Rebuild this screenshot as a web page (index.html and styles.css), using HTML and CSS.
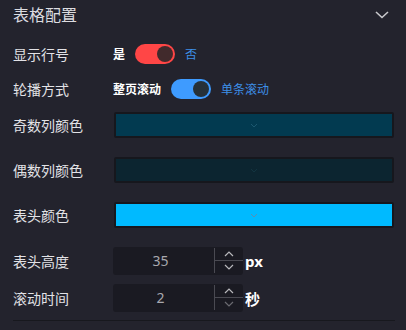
FILE: index.html
```html
<!DOCTYPE html>
<html>
<head>
    <meta charset="utf-8">
    <title>表格配置</title>
    <link rel="stylesheet" href="styles.css">
</head>
<body>
    <div class="panel">
        <div class="panel-header">
            <span class="panel-title">表格配置</span>
            <svg class="chevron" width="14" height="8" viewBox="0 0 14 8">
                <path d="M1 1 L7 6.5 L13 1" fill="none" stroke="#c8c8cc" stroke-width="1.6"/>
            </svg>
        </div>

        <div class="row row-switch first">
            <label class="label">显示行号</label>
            <span class="opt on">是</span>
            <span class="switch red"><span class="knob"></span></span>
            <span class="opt alt">否</span>
        </div>
        <div class="row row-switch">
            <label class="label">轮播方式</label>
            <span class="opt on">整页滚动</span>
            <span class="switch blue"><span class="knob"></span></span>
            <span class="opt alt">单条滚动</span>
        </div>

        <div class="row row-color first">
            <label class="label">奇数列颜色</label>
            <div class="swatch odd">
                <svg width="8" height="5" viewBox="0 0 8 5"><path d="M1 1 L4 4 L7 1" fill="none" stroke="#1c5870" stroke-width="1"/></svg>
            </div>
        </div>
        <div class="row row-color">
            <label class="label">偶数列颜色</label>
            <div class="swatch even">
                <svg width="8" height="5" viewBox="0 0 8 5"><path d="M1 1 L4 4 L7 1" fill="none" stroke="#123440" stroke-width="1"/></svg>
            </div>
        </div>
        <div class="row row-color">
            <label class="label">表头颜色</label>
            <div class="swatch head">
                <svg width="8" height="5" viewBox="0 0 8 5"><path d="M1 1 L4 4 L7 1" fill="none" stroke="#5a8fb0" stroke-width="1"/></svg>
            </div>
        </div>

        <div class="row row-num first">
            <label class="label">表头高度</label>
            <div class="num-input">
                <span class="num-value">35</span>
                <div class="num-ctrl">
                    <span class="step"><svg width="10" height="6" viewBox="0 0 10 6"><path d="M1 5 L5 1 L9 5" fill="none" stroke="#b8b8bc" stroke-width="1.2"/></svg></span>
                    <span class="step down"><svg width="10" height="6" viewBox="0 0 10 6"><path d="M1 1 L5 5 L9 1" fill="none" stroke="#b8b8bc" stroke-width="1.2"/></svg></span>
                </div>
            </div>
            <span class="unit">px</span>
        </div>
        <div class="row row-num">
            <label class="label">滚动时间</label>
            <div class="num-input">
                <span class="num-value">2</span>
                <div class="num-ctrl">
                    <span class="step"><svg width="10" height="6" viewBox="0 0 10 6"><path d="M1 5 L5 1 L9 5" fill="none" stroke="#b8b8bc" stroke-width="1.2"/></svg></span>
                    <span class="step down"><svg width="10" height="6" viewBox="0 0 10 6"><path d="M1 1 L5 5 L9 1" fill="none" stroke="#6a6a70" stroke-width="1.2"/></svg></span>
                </div>
            </div>
            <span class="unit">秒</span>
        </div>

        <div class="divider"></div>
    </div>
</body>
</html>
```

FILE: styles.css
```css
* {
    margin: 0;
    padding: 0;
    box-sizing: border-box;
}
body {
    font-family: "Noto Sans", "Noto Sans CJK SC", sans-serif;
    background: #23232d;
    color: #e2e2e6;
}
.panel {
    padding: 0 11px 0 13px;
}
.panel-header {
    height: 28px;
    display: flex;
    align-items: center;
    justify-content: space-between;
}
.panel-title {
    font-size: 16px;
    color: #dcdce0;
}
.chevron {
    margin-right: 6px;
    margin-top: 2px;
}
.row {
    display: flex;
    align-items: center;
}
.label {
    width: 100px;
    flex-shrink: 0;
    font-size: 14px;
    color: #e2e2e6;
}
.row-switch {
    height: 20px;
    margin-top: 15px;
}
.row-switch.first {
    margin-top: 16px;
}
.opt {
    font-size: 12px;
}
.opt.on {
    color: #ffffff;
    font-weight: bold;
}
.opt.alt {
    color: #3d8fe8;
}
.switch {
    width: 40px;
    height: 20px;
    border-radius: 10px;
    margin: 0 10px;
    display: flex;
    justify-content: flex-end;
    align-items: center;
    padding: 0 2px;
}
.switch.red {
    background: #ff4646;
}
.switch.blue {
    background: #3e9bff;
}
.knob {
    width: 16px;
    height: 16px;
    border-radius: 50%;
}
.switch.red .knob {
    background: #412a2c;
}
.switch.blue .knob {
    background: #263139;
}
.row-color {
    height: 26px;
    margin-top: 19px;
}
.row-color.first {
    margin-top: 13px;
}
.swatch {
    margin-left: 1px;
    width: 280px;
    height: 26px;
    border: 2px solid #16171d;
    border-radius: 2px;
    display: flex;
    align-items: center;
    justify-content: center;
}
.swatch.odd {
    background: #023a50;
}
.swatch.even {
    background: #0c2530;
}
.swatch.head {
    background: #00baff;
}
.row-num {
    height: 28px;
    margin-top: 9px;
}
.row-num.first {
    margin-top: 19px;
}
.num-input {
    width: 130px;
    height: 28px;
    background: #1a1a22;
    border-radius: 3px;
    display: flex;
}
.num-value {
    flex: 1;
    text-align: center;
    line-height: 28px;
    font-size: 14px;
    color: #a8a8ae;
    padding-left: -4px;
    margin-right: 6px;
}
.num-ctrl {
    width: 29px;
    margin: 1px 0 2px;
    border-left: 1px solid #4a4a52;
    display: flex;
    flex-direction: column;
}
.step {
    flex: 1;
    display: flex;
    align-items: center;
    justify-content: center;
}
.step.down {
    border-top: 1px solid #4a4a52;
}
.unit {
    margin-left: 2px;
    font-size: 15px;
    font-weight: bold;
    color: #ffffff;
}
.divider {
    margin-top: 8px;
    height: 1px;
    background: #17181e;
}
```
